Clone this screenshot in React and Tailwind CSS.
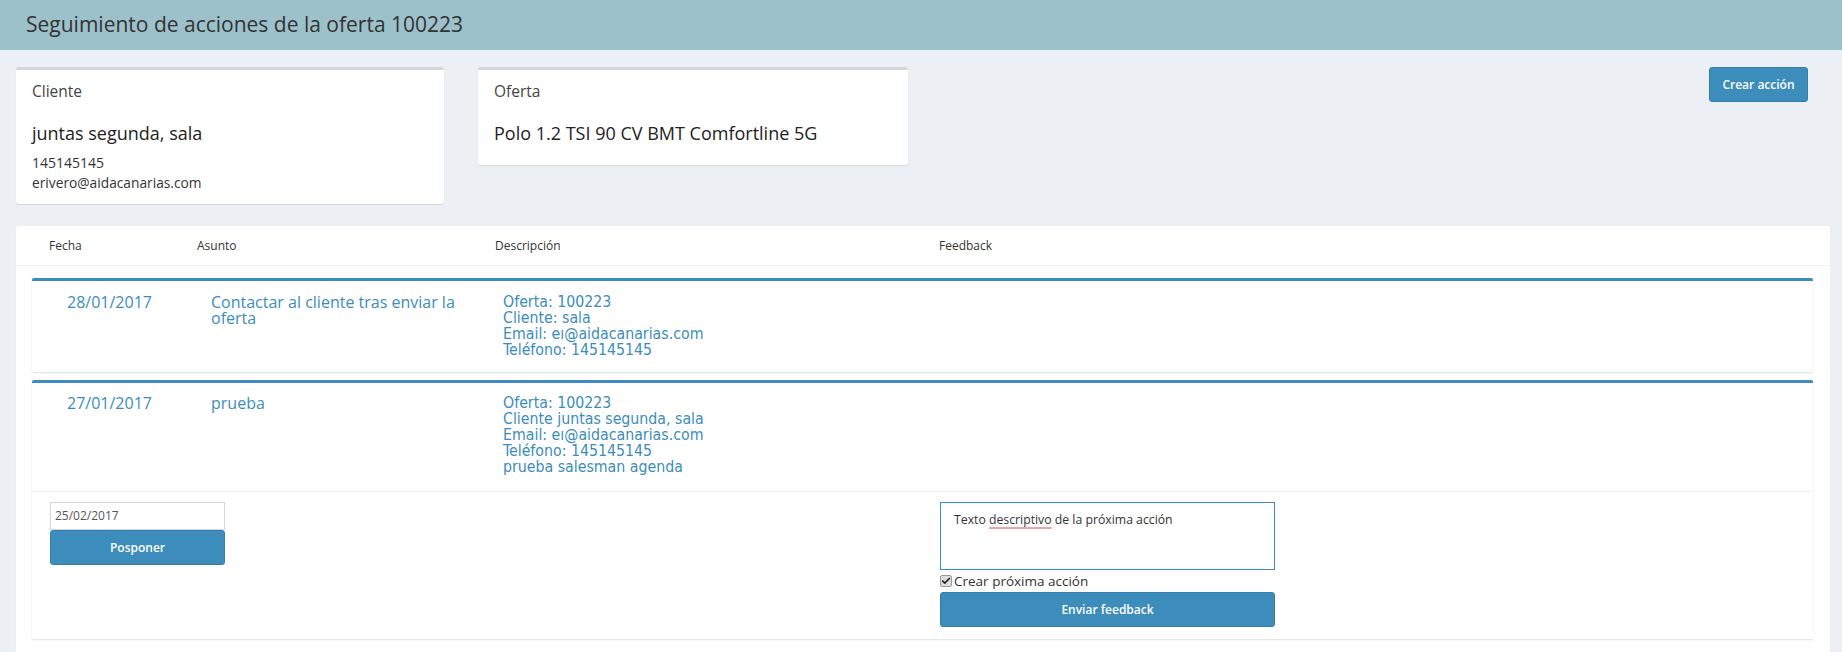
import { Check } from 'lucide-react'

const acciones = [
  {
    fecha: '28/01/2017',
    asunto: 'Contactar al cliente tras enviar la oferta',
    descripcion: ['Oferta: 100223', 'Cliente: sala', 'Email: eı@aidacanarias.com', 'Teléfono: 145145145'],
  },
  {
    fecha: '27/01/2017',
    asunto: 'prueba',
    descripcion: [
      'Oferta: 100223',
      'Cliente juntas segunda, sala',
      'Email: eı@aidacanarias.com',
      'Teléfono: 145145145',
      'prueba salesman agenda',
    ],
    pendiente: true,
  },
]

function InfoCard({ label, className, children }) {
  return (
    <div
      className={`rounded-[3px] border-t-[3px] border-[#d2d6de] bg-white px-4 shadow-[0_1px_1px_rgba(0,0,0,0.1)] ${className}`}
    >
      <p className="pt-[10px] text-[15.5px] leading-[22px] text-[#444]">{label}</p>
      {children}
    </div>
  )
}

function AccionRow({ accion }) {
  return (
    <article className="rounded-[2px] border-t-[3px] border-[#3c8dbc] bg-white shadow-[0_1px_2px_rgba(0,0,0,0.13)]">
      <div className={`grid grid-cols-[144px_292px_437px_1fr] pl-[35px] ${accion.pendiente ? 'pt-3 pb-4' : 'pt-[13px] pb-[14px]'}`}>
        <p className="text-[16px] leading-4 text-[#3c8dbc]">{accion.fecha}</p>
        <p className="pr-[36px] text-[16px] leading-4 text-[#3c8dbc]">{accion.asunto}</p>
        <div className="font-['DejaVu_Sans_Condensed','DejaVu_Sans',sans-serif] text-[15.75px] leading-4 text-[#3c8dbc]">
          {accion.descripcion.map((line) => (
            <p key={line} className="whitespace-nowrap">{line}</p>
          ))}
        </div>
        <div />
      </div>

      {accion.pendiente && (
        <div className="grid grid-cols-[890px_335px_1fr] border-t border-[#f0f0f0] pl-[18px] pt-[10px] pb-3">
          <div className="flex w-[175px] flex-col">
            <div className="flex h-[28px] items-center border border-[#d2d6de] px-1 text-[12px] text-[#555]">25/02/2017</div>
            <button
              type="button"
              className="h-[35px] rounded-[3px] border border-[#367fa9] bg-[#3c8dbc] text-[12px] font-semibold text-white"
            >
              Posponer
            </button>
          </div>

          <div className="flex flex-col">
            <div className="h-[68px] border border-[#3c8dbc] px-[13px] pt-[9px] text-[12.25px] leading-4 text-[#333]">
              Texto{' '}
              <span className="underline decoration-[#f2a3a3] decoration-2 underline-offset-[3px]">descriptivo</span> de la próxima acción
            </div>
            <label className="flex h-[22px] items-center text-[13.5px] text-[#333]">
              <span className="mr-[2px] flex h-[12px] w-[12px] items-center justify-center rounded-[2px] border border-[#999] bg-[#ddd]">
                <Check className="h-[10px] w-[10px] text-[#222]" strokeWidth={4} />
              </span>
              Crear próxima acción
            </label>
            <button
              type="button"
              className="h-[35px] rounded-[3px] border border-[#367fa9] bg-[#3c8dbc] text-[12px] font-semibold text-white"
            >
              Enviar feedback
            </button>
          </div>
          <div />
        </div>
      )}
    </article>
  )
}

export default function App() {
  return (
    <div className="h-[652px] overflow-hidden bg-[#ecf0f5] font-['Open_Sans',sans-serif]">
      <header className="flex h-[50px] items-center bg-[#9dc1ca] pl-[26px]">
        <h1 className="text-[21px] text-[#333]">Seguimiento de acciones de la oferta 100223</h1>
      </header>

      <div className="pl-4 pr-3">
        <div className="mt-[17px] flex items-start">
          <InfoCard label="Cliente" className="h-[137px] w-[428px]">
            <p className="mt-[19px] text-[18px] leading-6 text-[#222]">juntas segunda, sala</p>
            <p className="mt-2 text-[14px] leading-5 text-[#333]">145145145</p>
            <p className="text-[13.75px] leading-5 text-[#333]">erivero@aidacanarias.com</p>
          </InfoCard>

          <InfoCard label="Oferta" className="ml-[34px] h-[98px] w-[430px]">
            <p className="mt-[19px] text-[18px] leading-6 text-[#222]">Polo 1.2 TSI 90 CV BMT Comfortline 5G</p>
          </InfoCard>

          <button
            type="button"
            className="ml-auto mr-[22px] h-[35px] w-[99px] rounded-[3px] border border-[#367fa9] bg-[#3c8dbc] text-[12px] font-semibold text-white"
          >
            Crear acción
          </button>
        </div>

        <section className="mt-[22px] h-[440px] rounded-[3px] bg-white pl-4 pr-[17px] shadow-[0_1px_1px_rgba(0,0,0,0.1)]">
          <div className="-ml-4 -mr-[17px] grid h-[40px] grid-cols-[148px_298px_444px_1fr] items-center border-b border-[#f0f0f0] pl-[33px] text-[12px] text-[#333]">
            <span>Fecha</span>
            <span>Asunto</span>
            <span>Descripción</span>
            <span>Feedback</span>
          </div>

          <div className="mt-3 flex flex-col gap-2">
            {acciones.map((accion) => (
              <AccionRow key={accion.fecha} accion={accion} />
            ))}
          </div>
        </section>
      </div>
    </div>
  )
}
